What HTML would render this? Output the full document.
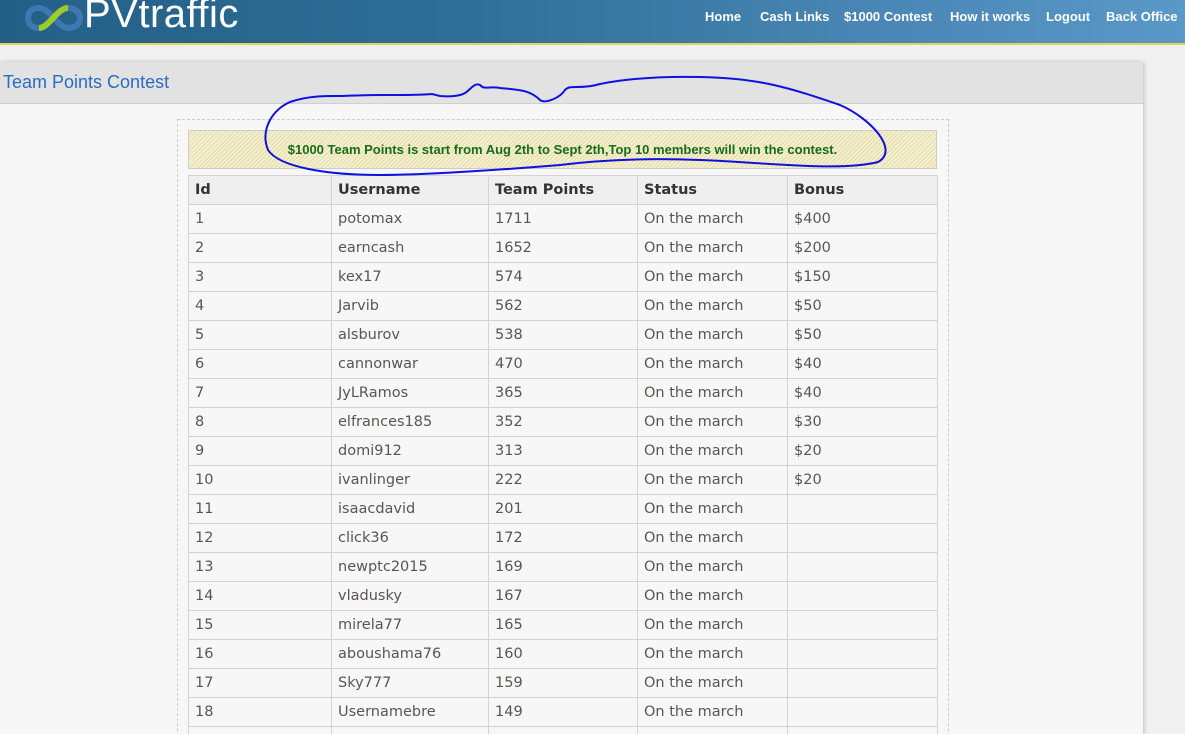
<!DOCTYPE html>
<html style="overflow:hidden;height:734px"><head><style>
body{margin:0;width:1185px;height:734px;overflow:hidden;background:#f0f0f0;font-family:"Liberation Sans",sans-serif;position:relative}
.hdr{position:absolute;left:0;top:0;width:1185px;height:43px;background:linear-gradient(90deg,#245f86 0%,#2f6f98 40%,#4a87b6 75%,#5a98c8 100%);border-bottom:2px solid #e2d45a}
.logo{position:absolute;left:84px;top:-8px;color:#fff;font-size:40px;letter-spacing:0.5px}
.nav{position:absolute;top:9px;font-size:13px;font-weight:bold;color:#fff}
.panel{position:absolute;left:0;top:62px;width:1143px;height:672px;overflow:hidden;background:#f7f7f7;border-radius:0 4px 0 0;box-shadow:1px 0 4px #bbb}
.ph{height:41px;background:#e2e2e2;border-bottom:1px solid #d0d0d0}
.ph span{position:absolute;left:3px;top:10px;font-size:18px;color:#2a6cbf}
.box{position:absolute;left:177px;top:57px;width:770px;height:700px;border:1px dashed #ccc}
.note{position:absolute;left:188px;top:68px;width:747px;height:37px;border:1px solid #ccc;background:repeating-linear-gradient(135deg,#f4efcf 0 2px,#e2dca8 2px 3px);text-align:center;line-height:38px;font-size:13px;font-weight:bold;color:#1a6b1a}
table{position:absolute;left:188px;top:113px;border-collapse:collapse;font-family:"DejaVu Sans",sans-serif;font-size:14.5px;color:#5a5550}
td,th{border:1px solid #d3d3d3;height:28px;padding:0 6px;text-align:left}
th{background:#efefef;color:#333;font-weight:bold}
</style></head><body>
<div class="hdr">
<svg style="position:absolute;left:25px;top:4px" width="58" height="28" viewBox="0 0 58 28"><path d="M14 4c-7 0-11 4-11 10s4 10 11 10c10 0 18-20 29-20 7 0 12 4 12 10s-5 10-12 10c-10 0-18-20-29-20z" fill="none" stroke="#3f77b3" stroke-width="6"/><path d="M14 24c10 0 18-20 29-20" fill="none" stroke="#9ccc2a" stroke-width="6"/></svg>
<div class="logo">PVtraffic</div>
<span class="nav" style="left:705px">Home</span>
<span class="nav" style="left:760px">Cash Links</span>
<span class="nav" style="left:844px">$1000 Contest</span>
<span class="nav" style="left:950px">How it works</span>
<span class="nav" style="left:1046px">Logout</span>
<span class="nav" style="left:1106px">Back Office</span>
</div>
<div class="panel">
<div class="ph"><span>Team Points Contest</span></div>
<div class="box"></div>
<div class="note">$1000 Team Points is start from Aug 2th to Sept 2th,Top 10 members will win the contest.</div>
<table>
<tr><th style="width:130px">Id</th><th style="width:144px">Username</th><th style="width:136px">Team Points</th><th style="width:137px">Status</th><th style="width:137px">Bonus</th></tr>
<tr><td>1</td><td>potomax</td><td>1711</td><td>On the march</td><td>$400</td></tr>
<tr><td>2</td><td>earncash</td><td>1652</td><td>On the march</td><td>$200</td></tr>
<tr><td>3</td><td>kex17</td><td>574</td><td>On the march</td><td>$150</td></tr>
<tr><td>4</td><td>Jarvib</td><td>562</td><td>On the march</td><td>$50</td></tr>
<tr><td>5</td><td>alsburov</td><td>538</td><td>On the march</td><td>$50</td></tr>
<tr><td>6</td><td>cannonwar</td><td>470</td><td>On the march</td><td>$40</td></tr>
<tr><td>7</td><td>JyLRamos</td><td>365</td><td>On the march</td><td>$40</td></tr>
<tr><td>8</td><td>elfrances185</td><td>352</td><td>On the march</td><td>$30</td></tr>
<tr><td>9</td><td>domi912</td><td>313</td><td>On the march</td><td>$20</td></tr>
<tr><td>10</td><td>ivanlinger</td><td>222</td><td>On the march</td><td>$20</td></tr>
<tr><td>11</td><td>isaacdavid</td><td>201</td><td>On the march</td><td></td></tr>
<tr><td>12</td><td>click36</td><td>172</td><td>On the march</td><td></td></tr>
<tr><td>13</td><td>newptc2015</td><td>169</td><td>On the march</td><td></td></tr>
<tr><td>14</td><td>vladusky</td><td>167</td><td>On the march</td><td></td></tr>
<tr><td>15</td><td>mirela77</td><td>165</td><td>On the march</td><td></td></tr>
<tr><td>16</td><td>aboushama76</td><td>160</td><td>On the march</td><td></td></tr>
<tr><td>17</td><td>Sky777</td><td>159</td><td>On the march</td><td></td></tr>
<tr><td>18</td><td>Usernamebre</td><td>149</td><td>On the march</td><td></td></tr>
<tr><td>&nbsp;</td><td></td><td></td><td></td><td></td></tr>
</table>
</div>
<svg style="position:absolute;left:0;top:0" width="1185" height="734"><path d="M343 96C380 94 410 96 432 94L440 96C450 97 460 96 465 93C470 90 475 82 480 85C484 90 490 86 500 88C520 90 530 90 540 100C545 104 560 98 565 90C570 84 580 90 600 84C620 80 650 76 700 77C760 78 790 88 840 105C870 118 900 150 878 162C840 172 760 162 700 160C650 158 600 160 560 165C500 170 420 175 380 175C330 175 280 168 268 150C260 130 272 110 290 102C310 95 330 96 343 96" fill="none" stroke="#1010e0" stroke-width="2"/></svg>
</body></html>
